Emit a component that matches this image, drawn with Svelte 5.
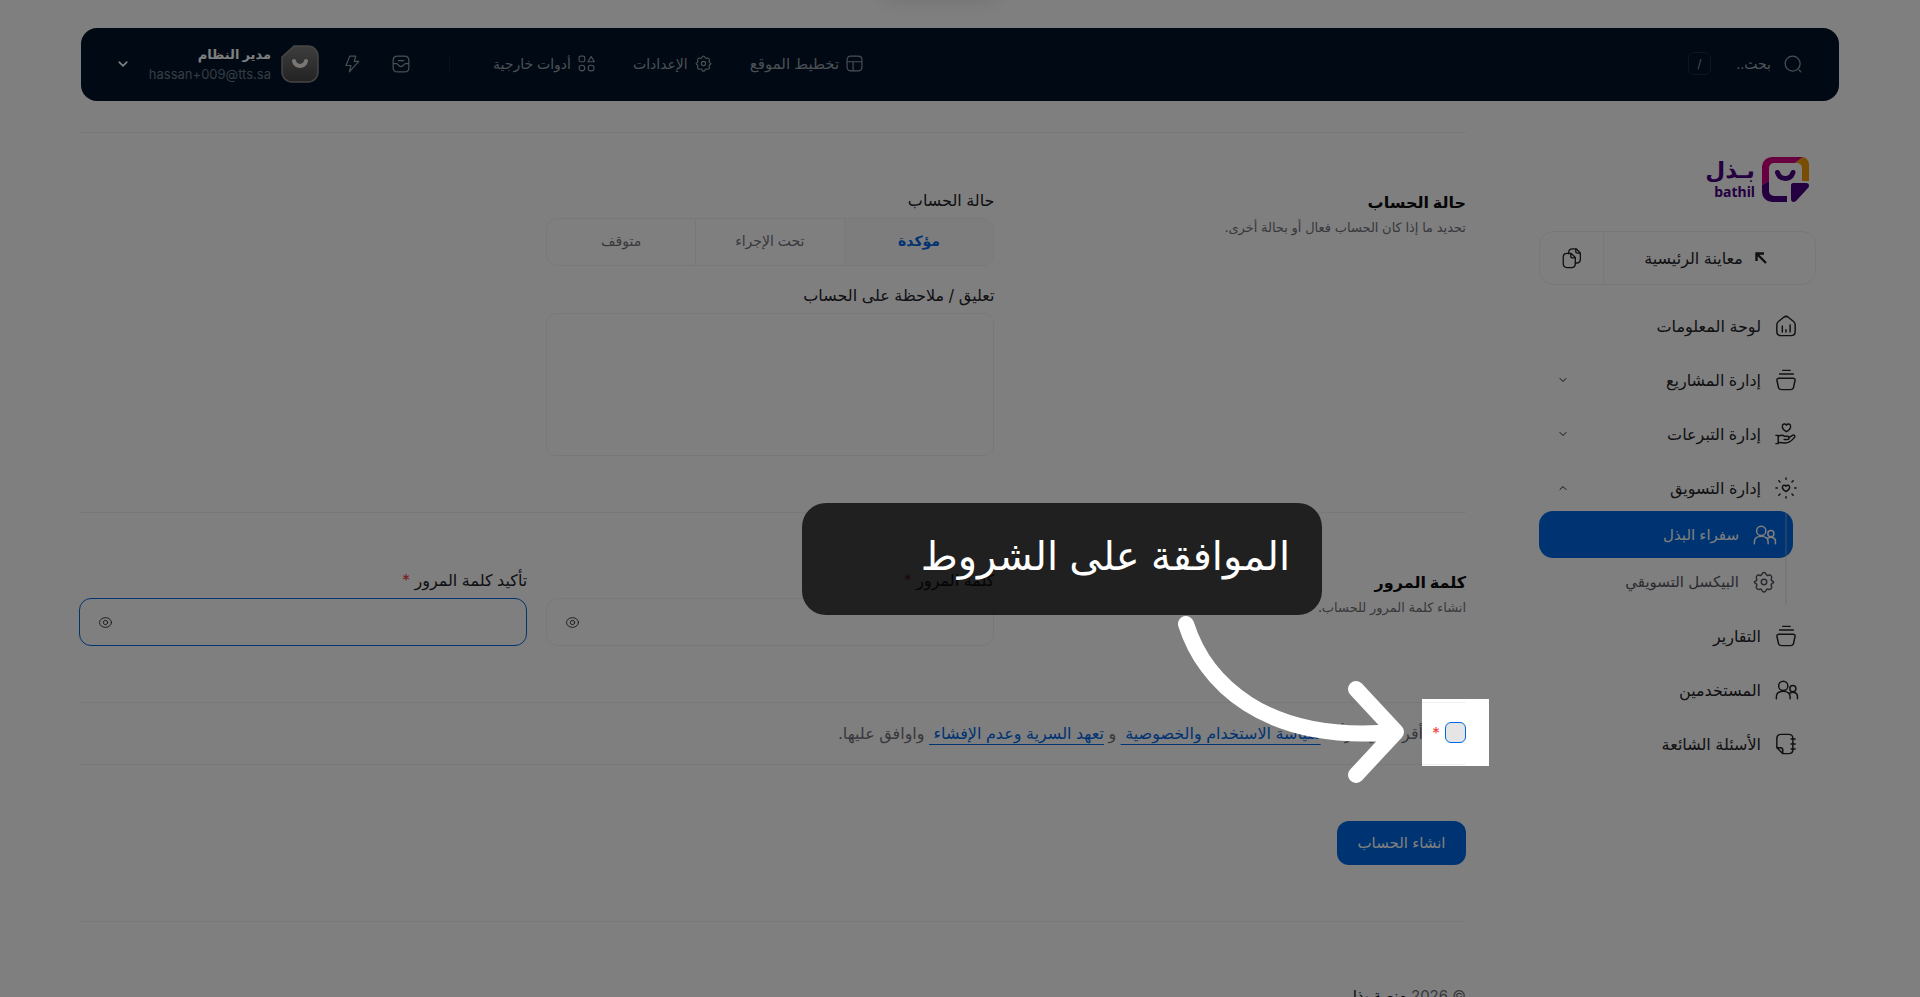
<script>
    /** Sidebar entries, top to bottom. */
    const menu = [
        { label: "لوحة المعلومات", icon: "home" },
        { label: "إدارة المشاريع", icon: "basket", arrow: "down" },
        { label: "إدارة التبرعات", icon: "donate", arrow: "down" },
        {
            label: "إدارة التسويق",
            icon: "sun",
            arrow: "up",
            children: [
                { label: "سفراء البذل", icon: "users", active: true },
                { label: "البيكسل التسويقي", icon: "gear" }
            ]
        },
        { label: "التقارير", icon: "basket" },
        { label: "المستخدمين", icon: "users" },
        { label: "الأسئلة الشائعة", icon: "note" }
    ];

    const tools = [
        { label: "تخطيط الموقع", icon: "layout" },
        { label: "الإعدادات", icon: "gear" },
        { label: "أدوات خارجية", icon: "shapes" }
    ];

    const statuses = ["مؤكدة", "تحت الإجراء", "متوقف"];

    let status = $state("مؤكدة");
    let note = $state("");
    let password = $state("");
    let confirmation = $state("");
    let accepted = $state(false);
    let showPassword = $state(false);
    let showConfirmation = $state(false);
</script>

{#snippet icon(name, size)}
    <svg class="icon" width={size} height={size} viewBox="0 0 24 24" aria-hidden="true">
        {#if name === "home"}
            <path d="M2 10.500c0-1.500.6-2.500 1.800-3.400l5.700-4.600c1.500-1.200 3.500-1.200 5 0l5.700 4.600c1.200.900 1.800 1.900 1.800 3.400V18c0 3-1.600 4.500-4.500 4.500h-11C3.600 22.500 2 21 2 18z" />
            <path d="M8 12v6.500M12 16v2.500M16.500 11v7.500" />
        {:else if name === "basket"}
            <path d="M8.500 1.500h8M5 5.500h15M4.500 10h15c2 0 2.700 1 2.300 2.800l-1.500 7c-.4 1.900-1.300 2.700-3.300 2.700H7c-2 0-2.900-.8-3.300-2.700l-1.500-7C1.800 11 2.500 10 4.500 10z" />
        {:else if name === "donate"}
            <path d="M12.500 9.500c-3-1.800-4.500-3.300-4.500-5.500C8 .7 11.200.3 12.500 2.300 13.800.3 17 .7 17 4c0 2.200-1.500 3.700-4.500 5.500z" />
            <path d="M1 13.500h2.500v9H1M3.500 14.500c3-1.500 5-1.500 7 0h3c2.500 0 2.500 3.500 0 3.500H10M15 16l4-2.500c2-1 3.500.8 2 2.500-4 5-7 6.500-11 5.800-2.500-.5-4-.8-6.500-.3" />
        {:else if name === "sun"}
            <path d="M12 16c-2.800-1.500-4-2.800-4-4.700 0-2.600 2.800-3 4-1.200 1.200-1.800 4-1.400 4 1.200 0 1.900-1.200 3.200-4 4.700z" />
            <path d="M12 1v1.500M12 21.500V23M1 12h1.500M21.500 12H23M4.200 4.200l1.300 1.300M18.500 18.500l1.300 1.300M4.200 19.800l1.300-1.300M18.500 5.500l1.300-1.300" />
        {:else if name === "users"}
            <circle cx="9" cy="7.500" r="5" />
            <path d="M1.500 21.500v-2c0-4 3-6 7.500-6s7.500 2 7.500 6v2" />
            <circle cx="19.500" cy="10.500" r="3.300" />
            <path d="M16 15.500c4.500-2 8.500-.5 8.500 3.500v2.500" />
        {:else if name === "gear"}
            <circle cx="12" cy="12" r="3" />
            <path d="M9.800 3.300c.8-2.200 3.600-2.200 4.400 0 .4 1.300 1.500 1.800 2.800 1.300 2.300-.8 4.100 1.500 3.200 3.500-.7 1.300-.4 2.200.8 2.800 2 .8 2 1.900 0 2.700-1.200.6-1.500 1.500-.8 2.800.9 2-.9 4.300-3.200 3.500-1.300-.5-2.400 0-2.800 1.300-.8 2.200-3.600 2.200-4.400 0-.4-1.300-1.500-1.800-2.800-1.300-2.300.8-4.100-1.500-3.200-3.500.7-1.300.4-2.200-.8-2.800-2-.8-2-1.900 0-2.700 1.200-.6 1.500-1.500.8-2.800-.9-2 .9-4.300 3.200-3.500 1.300.5 2.400 0 2.800-1.300z" />
        {:else if name === "note"}
            <path d="M19.500 7V6c0-3-1.500-4.500-4.500-4.500H6.500C3.500 1.500 2 3 2 6v10l6.500 6.500H15c3 0 4.500-1.500 4.500-4.500zM2.500 16H6c1.800 0 2.500.8 2.500 2.500v3.500M17.500 6.500h4.500M17.500 12h4.500M17.500 17.500h4.500" />
        {:else if name === "layout"}
            <path d="M7 1.500h10c3.500 0 5.500 2 5.500 5.500v10c0 3.500-2 5.500-5.500 5.500H7c-3.500 0-5.500-2-5.500-5.500V7c0-3.500 2-5.500 5.500-5.500zM1.500 9.500h21M10 9.500v13" />
        {:else if name === "shapes"}
            <rect x="1.500" y="1.500" width="8" height="8" rx="2" />
            <path d="M18.500 2l4.500 7.500h-9z" />
            <circle cx="5.500" cy="18.500" r="4" />
            <rect x="14.500" y="14.500" width="8" height="8" rx="3.500" />
        {:else if name === "inbox"}
            <path d="M7.500 1.500h9c4 0 6 2 6 6v9c0 4-2 6-6 6h-9c-4 0-6-2-6-6v-9c0-4 2-6 6-6zM1.500 11.500H6c2.500 0 2.500 4 6 4s3.500-4 6-4h4.500M8.500 7.500h7" />
        {:else if name === "bolt"}
            <path d="M9 1.500h8L15 8.500h6L8.500 22.500l2-8.500H4z" />
        {:else if name === "search"}
            <circle cx="11.500" cy="11.500" r="10" />
            <path d="M20 20l2.500 2.500" />
        {:else if name === "copy"}
            <path d="M8 7V5.500C8 2.500 9.500 1 12.500 1H17l5 5v7.500c0 3-1.500 4.500-4.500 4.500H16M16.500 1.500V4c0 1.500.7 2.200 2.200 2.200h2.800" />
            <path d="M6 6.500h5l5 5V19c0 3-1.500 4.500-4.500 4.500H6c-3 0-4.500-1.500-4.500-4.500v-8C1.500 8 3 6.500 6 6.500zM10.500 7v2.500c0 1.600.8 2.300 2.300 2.300h2.700" />
        {:else if name === "eye"}
            <ellipse cx="12" cy="12" rx="11" ry="9" />
            <circle cx="12" cy="12" r="4" />
        {:else if name === "down"}
            <path d="M3 7.500l9 9 9-9" />
        {:else if name === "up"}
            <path d="M3 16.500l9-9 9 9" />
        {/if}
    </svg>
{/snippet}

<div class="page" dir="rtl">
    <div class="toast"></div>

    <header>
        <label class="search">
            {@render icon("search", 18)}
            <input type="search" placeholder="بحث.." />
            <kbd>/</kbd>
        </label>

        <nav class="tools">
            {#each tools as tool}
                <a href="#tools">{@render icon(tool.icon, 17)}<span>{tool.label}</span></a>
            {/each}
        </nav>

        <div class="actions">
            <button aria-label="الرسائل">{@render icon("inbox", 18)}</button>
            <button aria-label="إجراءات سريعة">{@render icon("bolt", 18)}</button>
        </div>

        <button class="account">
            <svg width="38" height="38" viewBox="0 0 38 38" aria-hidden="true">
                <defs>
                    <linearGradient id="avatar" x1="0" y1="0" x2="0" y2="1">
                        <stop offset="0" stop-color="#7c7c7c" />
                        <stop offset="1" stop-color="#454545" />
                    </linearGradient>
                </defs>
                <path d="M13 1h14a10 10 0 0 1 10 10v16a10 10 0 0 1-10 10H11A10 10 0 0 1 1 27V12z" fill="url(#avatar)" stroke="#8c8c8c" stroke-width="1.500" />
                <path d="M13 16c1.500 6.500 10.500 6.500 12 0" fill="none" stroke="#f2ede6" stroke-width="4" stroke-linecap="round" />
            </svg>
            <span class="who">
                <strong>مدير النظام</strong>
                <small>hassan+009@tts.sa</small>
            </span>
            <span class="caret">{@render icon("down", 10)}</span>
        </button>
    </header>

    <div class="body">
        <aside>
            <a class="logo" href="#home">
                <svg width="48" height="48" viewBox="0 0 48 48" aria-hidden="true">
                    <path d="M0 29V10A10 10 0 0 1 10 1h31l-8 6H12a5 5 0 0 0-5 5v13z" fill="#d1007f" />
                    <path d="M33 7l8-6c4 1 6 4 6 8v16h-7V12a5 5 0 0 0-5-5z" fill="#f59a0b" />
                    <path d="M0 29l7-4v10a5 5 0 0 0 5 5h13v6H10A10 10 0 0 1 0 36z" fill="#4b0082" />
                    <path d="M31 27h13c3 0 4 3 2 5L34 45c-2 2-5 1-5-2V29c0-1 1-2 2-2z" fill="#4b0082" />
                    <path d="M15.500 16.500c2.500 8 13 8 15.500 0" fill="none" stroke="#4b0082" stroke-width="5" stroke-linecap="round" />
                </svg>
                <span class="wordmark"><b>بـذل</b><i>bathil</i></span>
            </a>

            <div class="preview">
                <a href="#preview">
                    <svg width="12" height="12" viewBox="0 0 12 12" aria-hidden="true">
                        <path d="M1.500 9V1.500H9M2 2l9 9" fill="none" stroke="currentColor" stroke-width="2.400" />
                    </svg>
                    معاينة الرئيسية
                </a>
                <button aria-label="نسخ الرابط">{@render icon("copy", 20)}</button>
            </div>

            <ul class="menu">
                {#each menu as item}
                    <li>
                        <a href="#menu">
                            {@render icon(item.icon, 22)}
                            <span>{item.label}</span>
                            {#if item.arrow}
                                <span class="arrow">{@render icon(item.arrow, 8)}</span>
                            {/if}
                        </a>
                        {#if item.children}
                            <ul class="sub">
                                {#each item.children as child}
                                    <li>
                                        <a href="#menu" class:active={child.active}>
                                            {@render icon(child.icon, 22)}
                                            <span>{child.label}</span>
                                        </a>
                                    </li>
                                {/each}
                            </ul>
                        {/if}
                    </li>
                {/each}
            </ul>
        </aside>

        <main>
            <section class="row">
                <div class="about">
                    <h2>حالة الحساب</h2>
                    <p>تحديد ما إذا كان الحساب فعال أو بحالة أخرى.</p>
                </div>
                <div class="fields">
                    <div class="stack">
                        <div class="field" role="radiogroup" aria-labelledby="status-label">
                            <span class="label" id="status-label">حالة الحساب</span>
                            <div class="segments">
                                {#each statuses as option}
                                    <label class:chosen={status === option}>
                                        <input type="radio" name="status" value={option} bind:group={status} />
                                        {option}
                                    </label>
                                {/each}
                            </div>
                        </div>
                        <div class="field">
                            <label class="label" for="note">تعليق / ملاحظة على الحساب</label>
                            <textarea id="note" bind:value={note}></textarea>
                        </div>
                    </div>
                </div>
            </section>

            <section class="row">
                <div class="about">
                    <h2>كلمة المرور</h2>
                    <p>انشاء كلمة المرور للحساب.</p>
                </div>
                <div class="fields">
                    <div class="field">
                        <label class="label" for="password">كلمة المرور <em>*</em></label>
                        <div class="secret">
                            <input id="password" type={showPassword ? "text" : "password"} bind:value={password} />
                            <button aria-label="إظهار" onclick={() => (showPassword = !showPassword)}>{@render icon("eye", 13)}</button>
                        </div>
                    </div>
                    <div class="field">
                        <label class="label" for="confirmation">تأكيد كلمة المرور <em>*</em></label>
                        <div class="secret current">
                            <input id="confirmation" type={showConfirmation ? "text" : "password"} bind:value={confirmation} />
                            <button aria-label="إظهار" onclick={() => (showConfirmation = !showConfirmation)}>{@render icon("eye", 13)}</button>
                        </div>
                    </div>
                </div>
            </section>

            <section class="terms">
                <span class="tick">
                    <input type="checkbox" id="terms" bind:checked={accepted} />
                    <!-- guided tour: dims the page around the checkbox -->
                    <span class="spotlight"></span>
                    <span class="callout">الموافقة على الشروط</span>
                    <svg class="pointer" width="240" height="180" viewBox="0 0 240 180" aria-hidden="true">
                        <path d="M20 21C38 78 97 141 229 129M190 86l40 43-40 43" />
                    </svg>
                </span>
                <label for="terms"><em>*</em>&nbsp; أقر بأنني قرأت <a href="#privacy">سياسة الاستخدام والخصوصية{" "}</a>&nbsp;و <a href="#secrecy">تعهد السرية وعدم الإفشاء{" "}</a>&nbsp;واوافق عليها.</label>
            </section>

            <section class="submit">
                <button>انشاء الحساب</button>
            </section>

            <footer>© 2026 <b>منصة بذل</b>.</footer>
        </main>
    </div>
</div>

<style>
    /* the page is locked while the tour is open */
    :global(body) {
        background: #fff;
        overflow: hidden;
    }
    .page {
        position: relative;
        box-sizing: border-box;
        height: 100vh;
        padding-top: 28px;
        overflow: hidden;
        font-family: "Inter", "DejaVu Sans", sans-serif;
        font-size: 15px;
        line-height: 24px;
        color: #222228;
    }
    .page * {
        box-sizing: border-box;
    }
    .icon {
        display: block;
        flex: none;
        overflow: visible;
        fill: none;
        stroke: currentColor;
        stroke-width: 1.6;
        stroke-linecap: round;
        stroke-linejoin: round;
    }
    a {
        color: inherit;
        text-decoration: none;
    }
    button, input, textarea {
        font: inherit;
        color: inherit;
        margin: 0;
        padding: 0;
        border: 0;
        background: none;
    }
    em {
        font-style: normal;
        color: #ef4444;
    }
    ul {
        list-style: none;
        margin: 0;
        padding: 0;
    }
    .toast {
        position: absolute;
        top: -40px;
        left: 50%;
        width: 120px;
        height: 40px;
        margin-left: -80px;
        border-radius: 12px;
        box-shadow: 0 0 20px rgba(0, 0, 0, 0.12);
    }

    header {
        display: flex;
        align-items: center;
        height: 73px;
        margin: 0 81px;
        padding: 0 37px 2px;
        border-radius: 16px;
        background: #001328;
        color: #98a0aa;
    }
    .search {
        display: flex;
        align-items: center;
        margin-left: auto;
        font-size: 14px;
    }
    .search input {
        width: 60px;
        margin: 0 13px 0 0;
    }
    .search input::placeholder {
        color: #a3a8af;
        opacity: 1;
    }
    kbd {
        width: 23px;
        height: 23px;
        border: 1px solid #1c2c3e;
        border-radius: 6px;
        font-family: inherit;
        font-size: 12px;
        line-height: 21px;
        text-align: center;
    }
    .tools {
        display: flex;
        gap: 38px;
        font-size: 14px;
    }
    .tools a {
        display: flex;
        align-items: center;
        gap: 7px;
        white-space: nowrap;
    }
    .tools a:first-child {
        font-size: 15px;
    }
    .actions {
        display: flex;
        align-items: center;
        gap: 31px;
        margin-right: 43px;
        padding-right: 39px;
        border-right: 1px solid #16222f;
    }
    .account {
        display: flex;
        align-items: center;
        gap: 10px;
        margin-right: 24px;
        text-align: right;
    }
    .who {
        display: flex;
        flex-direction: column;
        width: 133px;
    }
    .who strong {
        font-size: 13px;
        line-height: 20px;
        color: #fff;
    }
    .who small {
        font-size: 13px;
        line-height: 20px;
        color: #6f7a86;
    }
    .caret {
        color: #fff;
    }
    .caret .icon {
        stroke-width: 4;
    }

    .body {
        display: flex;
        gap: 73px;
        padding: 31px 104px 0 79px;
    }
    aside {
        flex: none;
        width: 277px;
        padding-top: 24px;
    }
    main {
        flex: 1;
    }
    .logo {
        display: flex;
        gap: 7px;
        height: 48px;
        margin: 0 6px 27px 0;
        color: #4b0082;
    }
    .wordmark {
        display: flex;
        flex-direction: column;
        align-items: flex-start;
    }
    .wordmark b {
        font-size: 23px;
        line-height: 28px;
    }
    .wordmark i {
        font-family: "Noto Sans", sans-serif;
        font-size: 14px;
        font-style: normal;
        font-weight: 700;
        line-height: 16px;
    }
    .preview {
        display: flex;
        height: 54px;
        border: 1px solid #f0f0f0;
        border-radius: 14px;
        font-size: 16px;
    }
    .preview a {
        display: flex;
        flex: 1;
        align-items: center;
        justify-content: center;
        gap: 12px;
        padding-right: 8px;
    }
    .preview button {
        display: flex;
        align-items: center;
        justify-content: center;
        width: 64px;
        border-right: 1px solid #f0f0f0;
    }
    .menu {
        display: flex;
        flex-direction: column;
        gap: 8px;
        margin-top: 18px;
        font-size: 16px;
    }
    .menu a {
        display: flex;
        align-items: center;
        gap: 14px;
        height: 46px;
        padding: 0 19px 0 20px;
    }
    .arrow {
        margin-right: auto;
    }
    .arrow .icon {
        stroke-width: 3;
    }
    .sub {
        position: relative;
        margin-right: 23px;
        font-size: 15px;
    }
    .sub::after {
        content: "";
        position: absolute;
        top: 2px;
        bottom: 0;
        right: 6px;
        width: 2px;
        background: rgba(200, 200, 215, 0.3);
    }
    .sub a {
        height: 47px;
        padding-right: 18px;
        color: #55555e;
    }
    .sub a.active {
        border-radius: 14px;
        background: #0067e4;
        color: #fff;
    }

    section {
        border-top: 1px solid #f1f1f1;
    }
    .row {
        display: grid;
        grid-template-columns: 34% 1fr;
        padding: 56px 0;
    }
    h2 {
        margin: 0;
        font-size: 16px;
        line-height: 26px;
        color: #0c0c0f;
    }
    p {
        margin: 0;
        font-size: 13px;
        line-height: 24px;
        color: #71717a;
    }
    .fields {
        display: grid;
        grid-template-columns: 1fr 1fr;
        gap: 19px;
    }
    .stack {
        display: flex;
        flex-direction: column;
        gap: 18px;
    }
    .field {
        display: flex;
        flex-direction: column;
        gap: 7px;
    }
    .label {
        font-size: 16px;
        line-height: 22px;
    }
    .segments {
        display: grid;
        grid-template-columns: 1fr 1fr 1fr;
        height: 48px;
        border: 1px solid #f0f0f0;
        border-radius: 12px;
        overflow: hidden;
    }
    .segments label {
        position: relative;
        font-size: 14px;
        line-height: 44px;
        text-align: center;
        color: #71717a;
    }
    .segments label + label {
        border-right: 1px solid #f0f0f0;
    }
    .segments .chosen {
        background: #fafafa;
        color: #0067e4;
        font-weight: 700;
    }
    .segments input {
        position: absolute;
        inset: 0;
        opacity: 0;
    }
    textarea {
        height: 143px;
        padding: 12px;
        border: 1px solid #f0f0f0;
        border-radius: 10px;
        resize: none;
    }
    .secret {
        display: flex;
        height: 48px;
        padding: 0 16px 0 19px;
        border: 1px solid #f0f0f0;
        border-radius: 12px;
    }
    .secret.current {
        border-color: #0067e4;
    }
    .secret input {
        flex: 1;
        outline: 0;
    }
    .terms {
        display: flex;
        align-items: center;
        gap: 5px;
        height: 62px;
        padding-bottom: 2px;
        font-size: 16px;
        color: #71717a;
    }
    .terms a {
        color: #0067e4;
        text-decoration: underline;
        text-underline-offset: 5px;
    }
    .tick {
        position: relative;
        width: 21px;
        height: 21px;
    }
    .tick input {
        display: block;
        appearance: none;
        width: 21px;
        height: 21px;
        border: 1px solid #0067e4;
        border-radius: 6px;
        background: #e5e5e5;
    }
    .spotlight {
        position: absolute;
        z-index: 1;
        inset: -23px;
        box-shadow: 0 0 0 3000px rgba(0, 0, 0, 0.5);
        pointer-events: none;
    }
    .callout {
        position: absolute;
        z-index: 2;
        right: 144px;
        bottom: 128px;
        width: 520px;
        height: 112px;
        padding-right: 32px;
        border-radius: 24px;
        background: rgba(0, 0, 0, 0.75);
        font-size: 40px;
        line-height: 106px;
        color: #fff;
    }
    .pointer {
        position: absolute;
        z-index: 2;
        right: 60px;
        top: -119px;
        fill: none;
        stroke: #fff;
        stroke-width: 16;
        stroke-linecap: round;
        stroke-linejoin: round;
    }
    .submit {
        padding: 56px 0;
    }
    .submit button {
        width: 129px;
        height: 44px;
        border-radius: 12px;
        background: #0067e4;
        color: #fff;
    }
    footer {
        padding-top: 62px;
        border-top: 1px solid #f1f1f1;
        color: #71717a;
    }
    footer b {
        font-weight: 400;
        color: #0c0c0f;
    }
</style>
